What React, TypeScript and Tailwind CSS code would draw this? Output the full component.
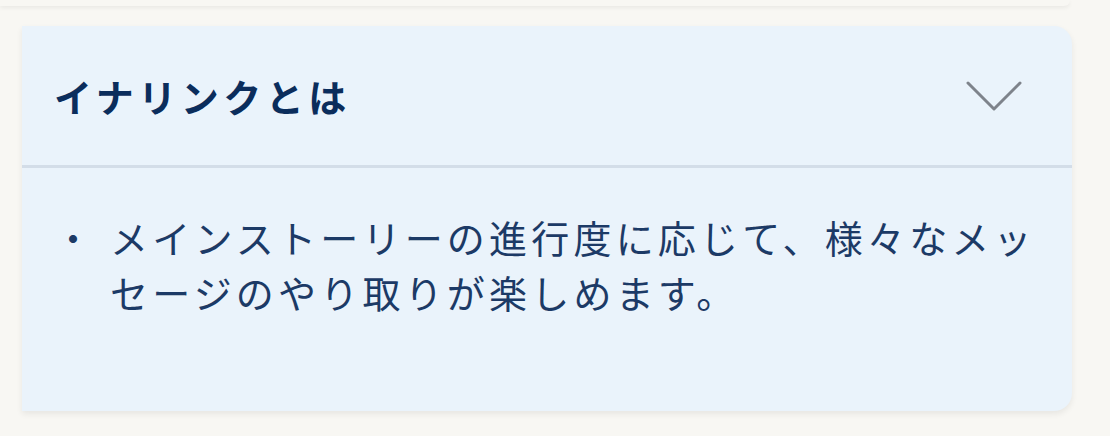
import React from "react";

export default function App() {
  return (
    <div
      className="w-[1110px] h-[436px] bg-[#f8f7f3] overflow-hidden relative"
      style={{ fontFamily: '"Noto Sans CJK JP", "Noto Sans", sans-serif' }}
    >
      <div className="h-[6px] w-[1070px] bg-[#f8f7f3] shadow-[0_2px_4px_rgba(0,0,0,0.06)] rounded-br-[16px]" />
      <div className="ml-[22px] mt-[20px] w-[1050px] bg-[#eaf3fb] rounded-tr-[18px] rounded-br-[18px] shadow-[0_3px_6px_rgba(0,0,0,0.07)]">
        <div className="h-[139px] flex items-center justify-between pl-[32px] pr-[50px]">
          <span className="text-[38px] font-bold text-[#0b2d5c] tracking-[4.5px] leading-none">
            イナリンクとは
          </span>
          <svg width="56" height="32" viewBox="0 0 56 32" fill="none">
            <path d="M2 3 L28 29 L54 3" stroke="#7e838b" strokeWidth="3" strokeLinecap="round" strokeLinejoin="round" />
          </svg>
        </div>
        <div className="h-[3px] bg-[#d3dde8]" />
        <div className="pt-[41px] pb-[92px] pl-[32px] pr-[10px] flex text-[#1c3a66] text-[38px] leading-[55px] tracking-[4.2px]">
          <span className="w-[56px] shrink-0">・</span>
          <p className="whitespace-nowrap">
            メインストーリーの進行度に応じて、様々なメッ
            <br />
            セージのやり取りが楽しめます。
          </p>
        </div>
      </div>
    </div>
  );
}
